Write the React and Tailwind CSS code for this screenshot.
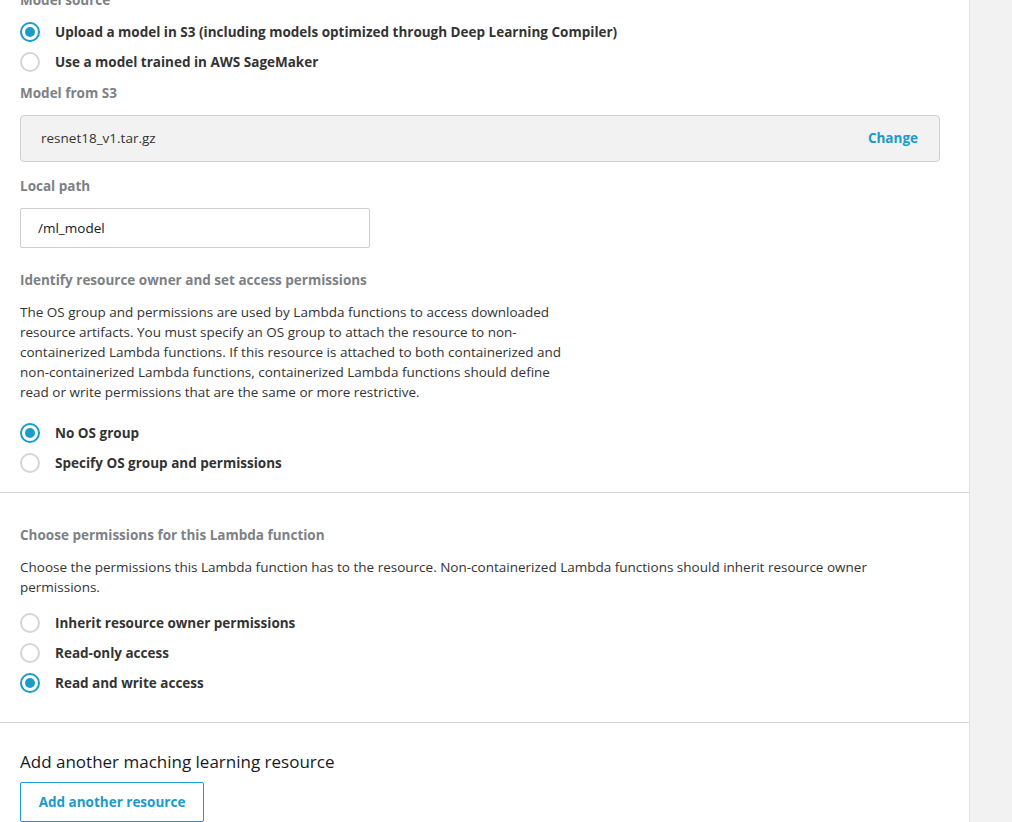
import React, { useState } from "react";

const font = { fontFamily: '"Open Sans", "Noto Sans", Arial, sans-serif' };

function Radio({ checked, label, onClick }) {
  return (
    <label className="flex items-center h-[30px] cursor-pointer" onClick={onClick}>
      <span
        className={`w-5 h-5 rounded-full flex items-center justify-center shrink-0 ${
          checked ? "border-[2px] border-[#1b9cc8]" : "border-[2px] border-[#d5d5d5]"
        }`}
      >
        {checked && <span className="w-[10px] h-[10px] rounded-full bg-[#1b9cc8]"></span>}
      </span>
      <span className="ml-[15px] text-[13.5px] font-bold text-[#333]">{label}</span>
    </label>
  );
}

function FieldLabel({ children, className = "" }) {
  return <p className={`text-[13.5px] font-bold text-[#7d8185] leading-5 ${className}`}>{children}</p>;
}

export default function App() {
  const [source, setSource] = useState("s3");
  const [group, setGroup] = useState("none");
  const [perm, setPerm] = useState("rw");

  return (
    <div className="flex w-[1012px] h-[822px] overflow-hidden bg-white" style={font}>
      <div className="w-[970px] shrink-0 border-r border-[#e3e3e3]">
        {/* model source */}
        <section className="px-5 mt-[-10px]">
          <FieldLabel>Model source</FieldLabel>
          <div className="mt-[7px]">
            <Radio
              checked={source === "s3"}
              label="Upload a model in S3 (including models optimized through Deep Learning Compiler)"
              onClick={() => setSource("s3")}
            />
            <Radio
              checked={source === "sm"}
              label="Use a model trained in AWS SageMaker"
              onClick={() => setSource("sm")}
            />
          </div>
          <FieldLabel className="mt-[6px]">Model from S3</FieldLabel>
          <div className="mt-[12px] w-[920px] h-[47px] rounded-[4px] border border-[#cfcfcf] bg-[#f2f2f2] flex items-center justify-between pl-5 pr-[21px]">
            <span className="text-[13.5px] text-[#333]">resnet18_v1.tar.gz</span>
            <span className="text-[13.5px] font-bold text-[#1a9bc7]">Change</span>
          </div>
          <FieldLabel className="mt-[14px]">Local path</FieldLabel>
          <div className="mt-[12px] w-[350px] h-[40px] border border-[#cfcfcf] rounded-[2px] flex items-center px-[17px]">
            <span className="text-[13.5px] text-[#16191f]">/ml_model</span>
          </div>

          <FieldLabel className="mt-[22px]">Identify resource owner and set access permissions</FieldLabel>
          <p className="mt-[12px] w-[548px] text-[13.5px] leading-5 text-[#333]">
            The OS group and permissions are used by Lambda functions to access downloaded resource artifacts. You must
            specify an OS group to attach the resource to non-containerized Lambda functions. If this resource is attached
            to both containerized and non-containerized Lambda functions, containerized Lambda functions should define
            read or write permissions that are the same or more restrictive.
          </p>
          <div className="mt-[16px] pb-[14px]">
            <Radio checked={group === "none"} label="No OS group" onClick={() => setGroup("none")} />
            <Radio
              checked={group === "spec"}
              label="Specify OS group and permissions"
              onClick={() => setGroup("spec")}
            />
          </div>
        </section>

        {/* lambda permissions */}
        <section className="border-t border-[#d5d5d5] px-5 pt-[32px] pb-[24px]">
          <FieldLabel>Choose permissions for this Lambda function</FieldLabel>
          <p className="mt-[12px] w-[880px] text-[13.5px] leading-5 text-[#333]">
            Choose the permissions this Lambda function has to the resource. Non-containerized Lambda functions should
            inherit resource owner permissions.
          </p>
          <div className="mt-[11px]">
            <Radio checked={perm === "inherit"} label="Inherit resource owner permissions" onClick={() => setPerm("inherit")} />
            <Radio checked={perm === "ro"} label="Read-only access" onClick={() => setPerm("ro")} />
            <Radio checked={perm === "rw"} label="Read and write access" onClick={() => setPerm("rw")} />
          </div>
        </section>

        {/* add another */}
        <section className="border-t border-[#d5d5d5] px-5 pt-[26px]">
          <h2 className="text-[17px] leading-[26px] text-[#16191f]">Add another maching learning resource</h2>
          <button className="mt-[7px] w-[184px] h-[40px] border border-[#1b9cc8] rounded-[2px] text-[13.5px] font-bold text-[#1a9bc7] bg-white">
            Add another resource
          </button>
        </section>
      </div>
      <div className="flex-1 bg-[#f2f2f2]"></div>
    </div>
  );
}
